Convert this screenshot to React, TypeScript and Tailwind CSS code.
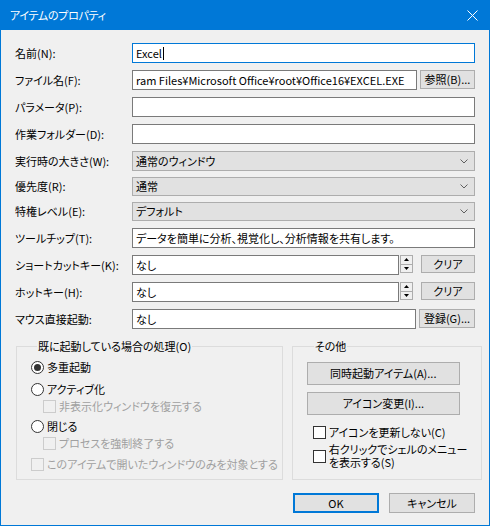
import type { ReactNode } from "react";

const FONT = "font-['Noto_Sans_CJK_JP','Noto_Sans',sans-serif] [font-feature-settings:'palt']";

function Label({ children }: { children: ReactNode }) {
  return <div className="w-[117px] shrink-0 leading-none whitespace-nowrap">{children}</div>;
}

function TextBox({ value = "", focused = false, className = "" }: { value?: string; focused?: boolean; className?: string }) {
  return (
    <div
      className={`h-full flex items-center bg-white border pl-[3px] whitespace-nowrap overflow-hidden ${
        focused ? "border-[#0078d7]" : "border-[#7a7a7a]"
      } ${className}`}
    >
      {value}
      {focused && <span className="inline-block w-px h-[13px] bg-black ml-px" />}
    </div>
  );
}

function Button({ children, className = "" }: { children: ReactNode; className?: string }) {
  return (
    <div className={`flex items-center justify-center bg-[#e1e1e1] border border-[#adadad] whitespace-nowrap ${className}`}>
      {children}
    </div>
  );
}

function ComboBox({ value }: { value: string }) {
  return (
    <div className="h-full flex items-center bg-[#e1e1e1] border border-[#adadad] pl-[3px] pr-[6px]">
      <span className="flex-1">{value}</span>
      <svg width="8" height="5" viewBox="0 0 8 5" className="shrink-0">
        <path d="M0.5 0.5 L4 4 L7.5 0.5" fill="none" stroke="#606060" strokeWidth="1" />
      </svg>
    </div>
  );
}

function Spinner() {
  return (
    <div className="w-[13px] h-[18px] ml-px flex flex-col border border-[#adadad] bg-[#f0f0f0]">
      <div className="flex-1 flex items-center justify-center border-b border-[#adadad]">
        <svg width="5" height="3" viewBox="0 0 5 3">
          <path d="M0 3 L2.5 0 L5 3 Z" fill="#000" />
        </svg>
      </div>
      <div className="flex-1 flex items-center justify-center">
        <svg width="5" height="3" viewBox="0 0 5 3">
          <path d="M0 0 L2.5 3 L5 0 Z" fill="#000" />
        </svg>
      </div>
    </div>
  );
}

function Radio({ checked = false }: { checked?: boolean }) {
  return (
    <span className="w-[13px] h-[13px] rounded-full border border-[#333] bg-white flex items-center justify-center shrink-0">
      {checked && <span className="w-[7px] h-[7px] rounded-full bg-[#333]" />}
    </span>
  );
}

function Check({ disabled = false }: { disabled?: boolean }) {
  return (
    <span
      className={`w-[13px] h-[13px] border shrink-0 ${disabled ? "border-[#cccccc] bg-[#f0f0f0]" : "border-[#333] bg-white"}`}
    />
  );
}

export default function App() {
  return (
    <div className={`w-[490px] h-[526px] bg-[#f0f0f0] border border-[#0078d7] text-[11px] text-black ${FONT} flex flex-col`}>
      {/* title bar */}
      <div className="h-[29px] bg-[#0078d7] flex items-center pl-[9px] pr-[11px] text-white shrink-0">
        <span className="flex-1 tracking-[-0.3px]">アイテムのプロパティ</span>
        <svg width="11" height="11" viewBox="0 0 11 11">
          <path d="M0.5 0.5 L10.5 10.5 M10.5 0.5 L0.5 10.5" stroke="#fff" strokeWidth="1" />
        </svg>
      </div>

      <div className="pl-[14px] pr-[14px] flex flex-col">
        {/* form rows */}
        <div className="flex items-center h-[20px] mt-[13px]">
          <Label>名前(N):</Label>
          <div className="flex-1 h-full">
            <TextBox value="Excel" focused />
          </div>
        </div>
        <div className="flex items-center h-[20px] mt-[7px]">
          <Label>ファイル名(F):</Label>
          <div className="flex-1 h-full flex">
            <TextBox value="ram Files¥Microsoft Office¥root¥Office16¥EXCEL.EXE" className="flex-1" />
            <Button className="w-[55px] ml-[3px] h-[19px]">参照(B)...</Button>
          </div>
        </div>
        <div className="flex items-center h-[20px] mt-[7px]">
          <Label>パラメータ(P):</Label>
          <div className="flex-1 h-full">
            <TextBox />
          </div>
        </div>
        <div className="flex items-center h-[20px] mt-[7px]">
          <Label>作業フォルダー(D):</Label>
          <div className="flex-1 h-full">
            <TextBox />
          </div>
        </div>
        <div className="flex items-center h-[20px] mt-[7px]">
          <Label>実行時の大きさ(W):</Label>
          <div className="flex-1 h-full">
            <ComboBox value="通常のウィンドウ" />
          </div>
        </div>
        <div className="flex items-center h-[19px] mt-[6px]">
          <Label>優先度(R):</Label>
          <div className="flex-1 h-full">
            <ComboBox value="通常" />
          </div>
        </div>
        <div className="flex items-center h-[19px] mt-[6px]">
          <Label>特権レベル(E):</Label>
          <div className="flex-1 h-full">
            <ComboBox value="デフォルト" />
          </div>
        </div>
        <div className="flex items-center h-[20px] mt-[7px]">
          <Label>ツールチップ(T):</Label>
          <div className="flex-1 h-full">
            <TextBox value="データを簡単に分析、視覚化し、分析情報を共有します。" />
          </div>
        </div>
        <div className="flex items-center h-[20px] mt-[7px]">
          <Label>ショートカットキー(K):</Label>
          <div className="flex-1 h-full flex items-start">
            <TextBox value="なし" className="flex-1" />
            <Spinner />
            <Button className="w-[54px] ml-[8px] h-[18px]">クリア</Button>
          </div>
        </div>
        <div className="flex items-center h-[20px] mt-[7px]">
          <Label>ホットキー(H):</Label>
          <div className="flex-1 h-full flex items-start">
            <TextBox value="なし" className="flex-1" />
            <Spinner />
            <Button className="w-[54px] ml-[8px] h-[18px]">クリア</Button>
          </div>
        </div>
        <div className="flex items-center h-[20px] mt-[7px]">
          <Label>マウス直接起動:</Label>
          <div className="flex-1 h-full flex">
            <TextBox value="なし" className="flex-1" />
            <Button className="w-[56px] ml-[3px] h-[19px]">登録(G)...</Button>
          </div>
        </div>

        {/* group boxes */}
        <div className="flex mt-[10px] gap-[9px]">
          <fieldset className="w-[268px] ml-px h-[141px] border border-[#dcdcdc] pl-[14px] pr-1 whitespace-nowrap">
            <legend className="ml-[6px] px-px leading-[14px]">既に起動している場合の処理(O)</legend>
            <div className="flex items-center gap-[3px] h-[16px] mt-[6px]">
              <Radio checked />
              <span>多重起動</span>
            </div>
            <div className="flex items-center gap-[3px] h-[16px] mt-[6px]">
              <Radio />
              <span>アクティブ化</span>
            </div>
            <div className="flex items-center gap-[3px] h-[16px] mt-px ml-[12px] text-[#a0a0a0]">
              <Check disabled />
              <span>非表示化ウィンドウを復元する</span>
            </div>
            <div className="flex items-center gap-[3px] h-[16px] mt-[4px]">
              <Radio />
              <span>閉じる</span>
            </div>
            <div className="flex items-center gap-[3px] h-[16px] mt-px ml-[12px] text-[#a0a0a0]">
              <Check disabled />
              <span>プロセスを強制終了する</span>
            </div>
            <div className="flex items-center gap-[3px] h-[16px] mt-[5px] text-[#a0a0a0]">
              <Check disabled />
              <span>このアイテムで開いたウィンドウのみを対象とする</span>
            </div>
          </fieldset>

          <fieldset className="flex-1 h-[141px] border border-[#dcdcdc] pl-[14px] pr-[14px] whitespace-nowrap">
            <legend className="ml-[7px] px-px leading-[14px]">その他</legend>
            <Button className="w-[153px] h-[23px] mt-[9px]">同時起動アイテム(A)...</Button>
            <Button className="w-[153px] h-[23px] mt-[7px]">アイコン変更(I)...</Button>
            <div className="flex items-center gap-[3px] h-[16px] mt-[9px] ml-[6px]">
              <Check />
              <span>アイコンを更新しない(C)</span>
            </div>
            <div className="flex items-center gap-[3px] mt-[3px] ml-[6px]">
              <Check />
              <span className="leading-[13px]">
                右クリックでシェルのメニュー
                <br />
                を表示する(S)
              </span>
            </div>
          </fieldset>
        </div>

        {/* dialog buttons */}
        <div className="flex justify-end gap-[10px] mt-[13px]">
          <div className="w-[86px] h-[20px] flex items-center justify-center bg-[#e1e1e1] border-2 border-[#0078d7]">OK</div>
          <div className="w-[86px] h-[20px] flex items-center justify-center bg-[#e1e1e1] border border-[#adadad]">キャンセル</div>
        </div>
      </div>
    </div>
  );
}
